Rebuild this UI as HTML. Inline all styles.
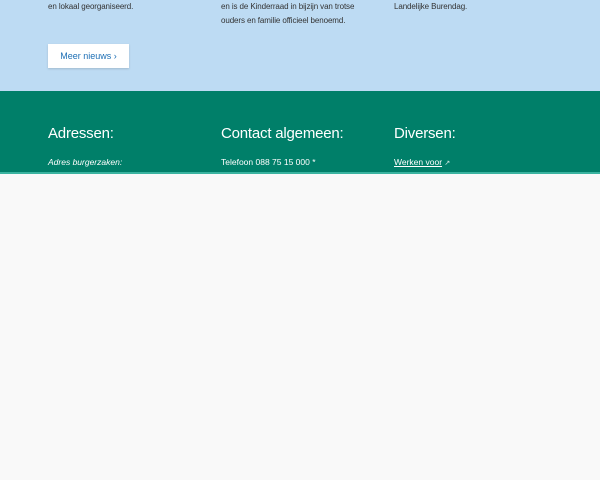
<!DOCTYPE html>
<html><head><meta charset="utf-8"><style>
body{margin:0;width:600px;height:480px;background:#f9f9f9;font-family:"Liberation Sans",sans-serif;overflow:hidden;position:relative}
.blue{position:absolute;left:0;top:0;width:600px;height:91px;background:#bddbf3}
.green{position:absolute;left:0;top:91px;width:600px;height:82px;background:#007f69}
.line{position:absolute;left:0;top:172px;width:600px;height:2px;background:#3ab3a0}
.t{position:absolute;font-size:8px;color:#333;line-height:14px;letter-spacing:-0.1px}
.btn{position:absolute;left:48px;top:44px;width:81px;height:24px;background:#fff;box-shadow:0 1px 2px rgba(0,0,0,.15);color:#1d6fb5;font-size:9px;line-height:24px;text-align:center}
h2{position:absolute;margin:0;font-weight:normal;color:#fff;font-size:15px;top:125px;letter-spacing:-0.2px}
.s{position:absolute;top:157px;color:#fff;font-size:8.5px}
</style></head><body>
<div class="blue"></div>
<div class="t" style="left:48px;top:0px">en lokaal georganiseerd.</div>
<div class="t" style="left:221px;top:0px">en is de Kinderraad in bijzijn van trotse<br>ouders en familie officieel benoemd.</div>
<div class="t" style="left:394px;top:0px">Landelijke Burendag.</div>
<div class="btn">Meer nieuws ›</div>
<div class="green"></div>
<div class="line"></div>
<h2 style="left:48px">Adressen:</h2>
<h2 style="left:221px">Contact algemeen:</h2>
<h2 style="left:394px">Diversen:</h2>
<div class="s" style="left:48px;font-style:italic">Adres burgerzaken:</div>
<div class="s" style="left:221px">Telefoon 088 75 15 000 *</div>
<div class="s" style="left:394px"><u>Werken voor</u> <span style="font-size:7px;opacity:.8">&#x2197;</span></div>
</body></html>
